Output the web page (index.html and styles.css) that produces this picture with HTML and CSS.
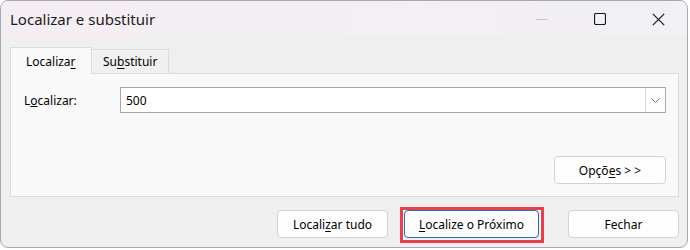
FILE: index.html
```html
<!DOCTYPE html>
<html lang="pt">
<head>
    <meta charset="UTF-8">
    <title>Localizar e substituir</title>
    <link rel="stylesheet" href="styles.css">
</head>
<body>
    <div class="window">
        <div class="titlebar">
            <span class="title">Localizar e substituir</span>
            <div class="controls">
                <span class="ctrl minimize">
                    <svg width="12" height="12" viewBox="0 0 12 12"><path d="M0.5 6.5 H11.5" stroke="#c4c4c8" stroke-width="1"/></svg>
                </span>
                <span class="ctrl">
                    <svg width="12" height="12" viewBox="0 0 12 12"><rect x="0.5" y="0.5" width="11" height="11" rx="1.5" fill="none" stroke="#1a1a1a" stroke-width="1.2"/></svg>
                </span>
                <span class="ctrl">
                    <svg width="13" height="13" viewBox="0 0 13 13"><path d="M0.8 0.8 L12.2 12.2 M12.2 0.8 L0.8 12.2" stroke="#1a1a1a" stroke-width="1.2"/></svg>
                </span>
            </div>
        </div>

        <div class="content">
            <div class="tabs">
                <div class="tab active">Localiza<u>r</u></div>
                <div class="tab">Su<u>b</u>stituir</div>
            </div>
            <div class="panel">
                <div class="field-row">
                    <label class="field-label">L<u>o</u>calizar:</label>
                    <div class="combo">
                        <span class="combo-value">500</span>
                        <span class="combo-arrow">
                            <svg width="9" height="5" viewBox="0 0 9 5"><path d="M0.5 0.5 L4.5 4.5 L8.5 0.5" fill="none" stroke="#707070" stroke-width="1"/></svg>
                        </span>
                    </div>
                </div>
                <div class="panel-footer">
                    <button class="btn btn-options">Opçõ<u>e</u>s &gt; &gt;</button>
                </div>
            </div>
            <div class="actions">
                <button class="btn btn-all">Locali<u>z</u>ar tudo</button>
                <span class="highlight">
                    <button class="btn btn-default"><u>L</u>ocalize o Próximo</button>
                </span>
                <button class="btn btn-close">Fechar</button>
            </div>
        </div>
    </div>
</body>
</html>
```

FILE: styles.css
```css
body {
    margin: 0;
    background-color: #ffffff;
    font-family: "Noto Sans", "Open Sans", sans-serif;
    font-size: 12px;
    color: #000;
}
.window {
    width: 688px;
    height: 248px;
    box-sizing: border-box;
    border: 1px solid #a9a9a9;
    border-radius: 8px;
    background-color: #efefef;
    overflow: hidden;
}
.titlebar {
    height: 36px;
    display: flex;
    align-items: center;
    background: linear-gradient(90deg, #f5edf4 0%, #f2eff5 60%, #f1f0f4 100%);
    padding-left: 9px;
}
.title {
    font-size: 15px;
    color: #1a1a1a;
    flex: 1;
    padding-bottom: 1px;
}
.controls {
    display: flex;
    height: 100%;
}
.ctrl {
    width: 58px;
    display: flex;
    align-items: center;
    justify-content: center;
}
.content {
    padding: 10px 8px 0 9px;
}
.tabs {
    display: flex;
    align-items: flex-end;
    height: 26px;
}
.tab {
    height: 24px;
    box-sizing: border-box;
    padding: 0 11px;
    display: flex;
    align-items: center;
    border: 1px solid #dcdcdc;
    border-bottom: none;
    border-left: none;
    background-color: #f0f0f0;
    color: #000;
}
.tab.active {
    height: 27px;
    width: 82px;
    padding: 0 0 0 15px;
    border-left: 1px solid #dcdcdc;
    background-color: #f9f9f9;
    position: relative;
    z-index: 1;
    margin-bottom: -1px;
}
.tab u {
    text-underline-offset: 2px;
}
.panel {
    height: 124px;
    box-sizing: border-box;
    border: 1px solid #dcdcdc;
    background-color: #f9f9f9;
    padding: 13px 12px 12px 13px;
    display: flex;
    flex-direction: column;
}
.field-row {
    display: flex;
    align-items: center;
}
.field-label {
    width: 96px;
}
.combo {
    flex: 1;
    height: 26px;
    box-sizing: border-box;
    border: 1px solid #a6a6a6;
    background-color: #fff;
    display: flex;
    align-items: center;
}
.combo-value {
    flex: 1;
    padding-left: 5px;
}
.combo-arrow {
    width: 20px;
    height: 100%;
    box-sizing: border-box;
    border-left: 1px solid #dadada;
    background-color: #fdfdfd;
    display: flex;
    align-items: center;
    justify-content: center;
}
.panel-footer {
    margin-top: auto;
    display: flex;
    justify-content: flex-end;
}
.btn {
    height: 28px;
    box-sizing: border-box;
    font-family: inherit;
    font-size: 12px;
    color: #000;
    background-color: #fdfdfd;
    border: 1px solid #d3d3d3;
    border-radius: 4px;
    padding: 0;
}
.btn u {
    text-underline-offset: 2px;
}
.btn-options {
    width: 112px;
}
.actions {
    display: flex;
    align-items: flex-start;
    padding-top: 13px;
    padding-left: 267px;
}
.btn-all {
    width: 111px;
}
.highlight {
    display: flex;
    margin-left: 12px;
    margin-top: -3px;
    border: 3px solid #ea3f4a;
    padding: 0 2px 2px 1px;
}
.btn-default {
    width: 135px;
    border-color: #1574c7;
}
.btn-close {
    width: 111px;
    margin-left: 24px;
}
```
